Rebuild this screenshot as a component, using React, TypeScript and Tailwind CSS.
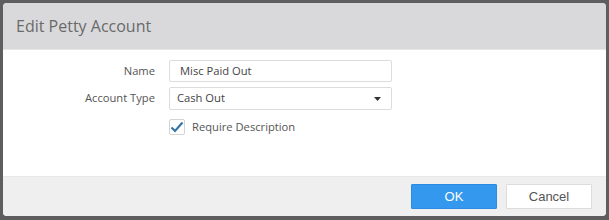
import React from "react";

export default function App() {
  return (
    <div className="w-[609px] h-[220px] bg-[#5e5e5e] p-[3px] pb-[4px]" style={{ fontFamily: '"Open Sans", "Noto Sans", sans-serif' }}>
      <div className="w-full h-full rounded-[4px] overflow-hidden flex flex-col bg-white">
        <div className="h-[47px] bg-[#d9d9dc] flex items-center pl-[13px] border-b border-[#e6e6e6]">
          <span className="text-[16px] text-[#6a6a6a]">Edit Petty Account</span>
        </div>
        <div className="flex-1 bg-white pt-[10px]">
          <div className="grid grid-cols-[152px_223px] gap-x-[14px] gap-y-[5px] items-center">
            <div className="text-right text-[11.2px] text-[#555]">Name</div>
            <div className="h-[22px] border border-[#dcdcdc] rounded-[2px] flex items-center pl-[10px] text-[11.2px] text-[#444]">Misc Paid Out</div>
            <div className="text-right text-[11.2px] text-[#555]">Account Type</div>
            <div className="h-[23px] border border-[#dcdcdc] rounded-[2px] flex items-center justify-between pl-[7px] pr-[10px] text-[11.2px] text-[#444]">
              <span>Cash Out</span>
              <svg width="7" height="4" viewBox="0 0 7 4"><path d="M0 0h7L3.5 4z" fill="#333" /></svg>
            </div>
            <div />
            <div className="flex items-center gap-[7px] pt-[4px]">
              <div className="w-[16px] h-[16px] border border-[#d4d4d4] rounded-[2px] flex items-center justify-center">
                <svg width="14" height="12" viewBox="0 0 14 12"><path d="M1.5 6.5L5 10L12.5 1.5" fill="none" stroke="#3a75a3" strokeWidth="2.2" /></svg>
              </div>
              <span className="text-[11.2px] text-[#555]">Require Description</span>
            </div>
          </div>
        </div>
        <div className="h-[40px] bg-[#efefef] border-t border-[#e8e8e8] flex items-center justify-end gap-[9px] pr-[14px]">
          <button className="w-[86px] h-[25px] bg-[#3499ee] border border-[#2c8ae0] text-white text-[13px] rounded-[1px]" style={{ fontFamily: '"Liberation Sans", Arial, sans-serif' }}>OK</button>
          <button className="w-[86px] h-[25px] bg-white border border-[#dcdcdc] text-[#555] text-[13px] rounded-[1px]" style={{ fontFamily: '"Liberation Sans", Arial, sans-serif' }}>Cancel</button>
        </div>
      </div>
    </div>
  );
}
